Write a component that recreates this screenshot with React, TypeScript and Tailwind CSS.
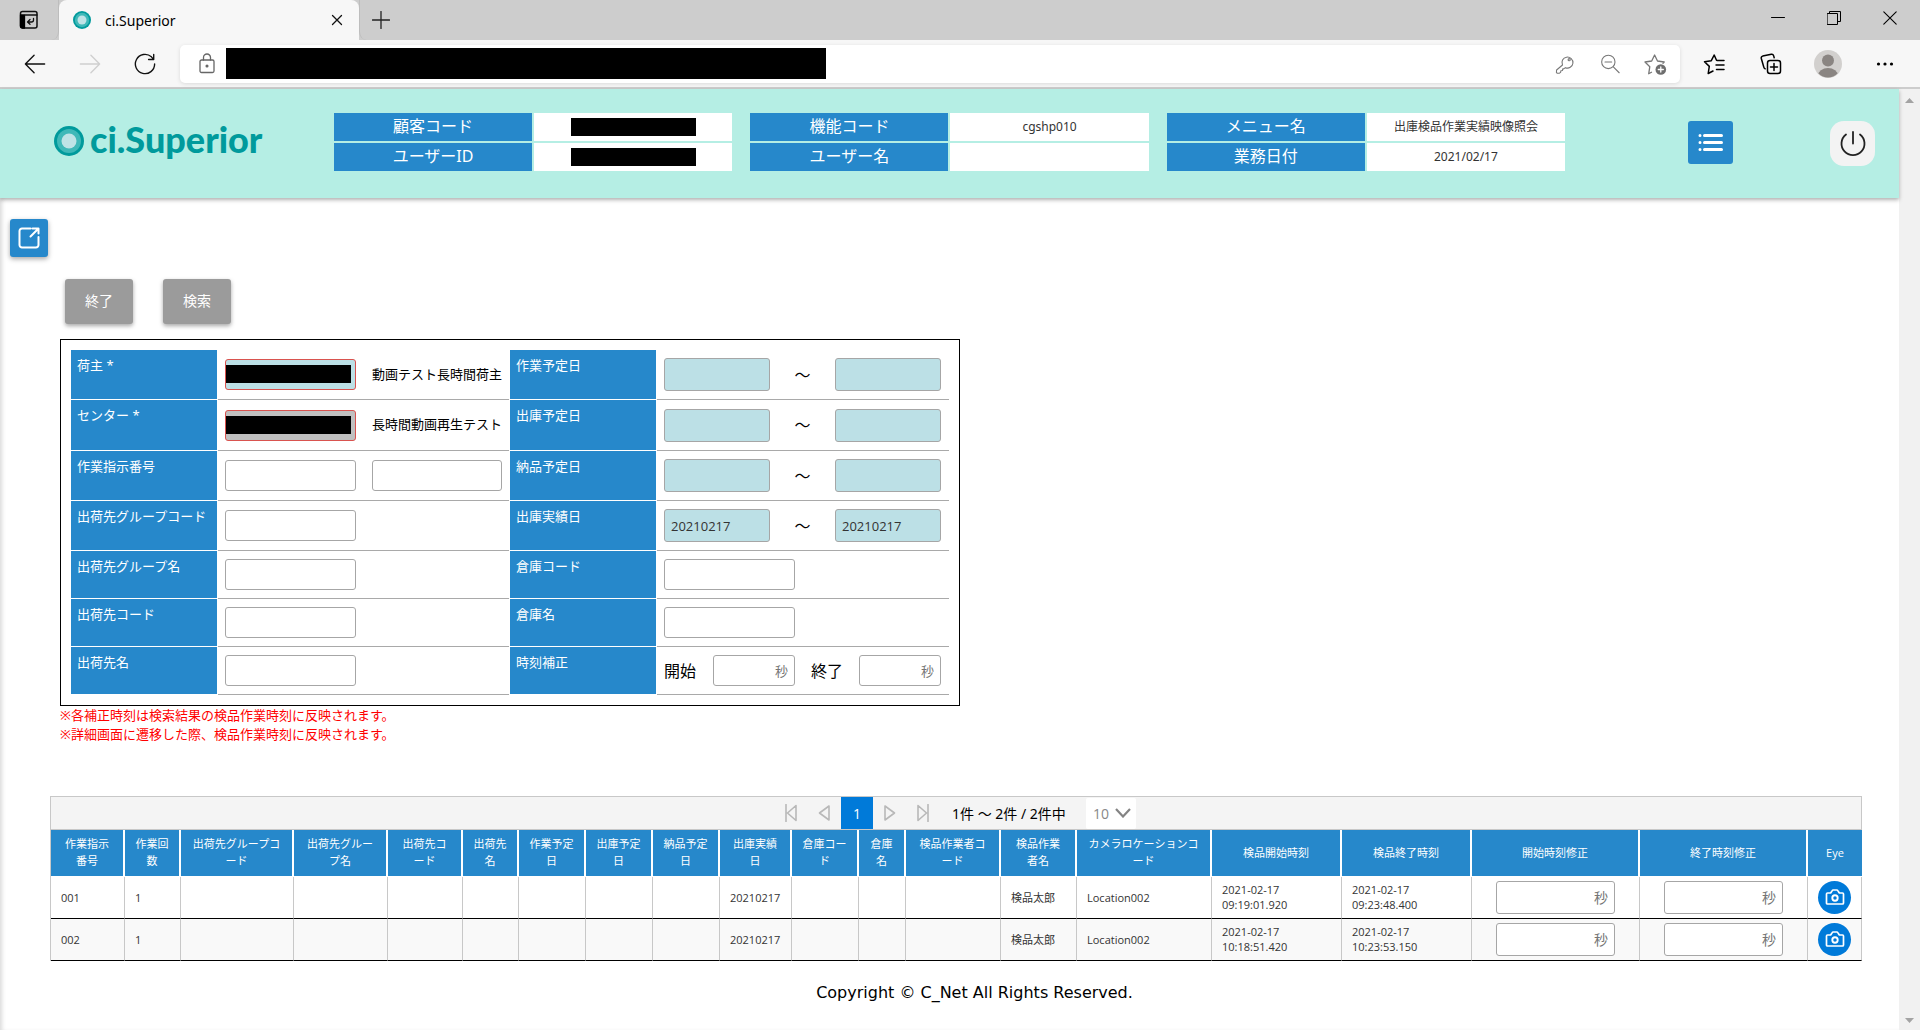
import React from "react";

type IconProps = { className?: string; children: React.ReactNode; box?: string };

function Icon({ className = "", children, box = "0 0 24 24" }: IconProps) {
  return (
    <svg
      viewBox={box}
      className={className}
      fill="none"
      stroke="currentColor"
      strokeWidth={1.3}
      strokeLinecap="round"
      strokeLinejoin="round"
      aria-hidden="true"
    >
      {children}
    </svg>
  );
}

function Ring({ className }: { className: string }) {
  return (
    <svg viewBox="0 0 30 30" className={className} aria-hidden="true">
      <circle cx="15" cy="15" r="15" fill="#009a9c" />
      <circle cx="15" cy="15" r="12" fill="#3fb8b8" />
      <circle cx="15" cy="15" r="7.5" fill="#bfe3e6" />
    </svg>
  );
}

function TitleBar() {
  const control = "flex h-9 w-14 items-center justify-center text-black";
  return (
    <div className="flex h-10 items-stretch bg-[#cdcdcd] pr-[2px]">
      <button aria-label="タブ操作" className="flex w-[59px] items-center justify-center rounded-br-lg border-r border-[#bdbdbd]">
        <Icon className="h-5 w-5" box="0 0 20 20">
          <rect x="1.5" y="1.5" width="16.5" height="16.5" rx="2" stroke="#111" strokeWidth="1.5" />
          <path d="M1.5 5h4v13h-2a2 2 0 0 1-2-2z" fill="#000" stroke="#000" />
          <path d="M6 5h12" stroke="#111" />
          <path d="M14.5 8.500v1.500a2 2 0 0 1-2 2H9M11 9.500L8.500 12l2.500 2.300" stroke="#111" strokeWidth="1.300" />
        </Icon>
      </button>
      <div className="flex w-[300px] items-center rounded-t-lg bg-[#f7f7f7] pr-3 pl-[14px]">
        <Ring className="h-[18px] w-[18px]" />
        <span className="ml-[14px] flex-1 font-['Noto_Sans',sans-serif] text-[14px] text-black">ci.Superior</span>
        <button aria-label="タブを閉じる" className="flex h-5 w-5 items-center justify-center">
          <Icon className="h-3 w-3" box="0 0 12 12">
            <path d="M1.500 1.500l9 9M10.500 1.500l-9 9" stroke="#111" />
          </Icon>
        </button>
      </div>
      <button aria-label="新しいタブ" className="flex w-[43px] items-center justify-center rounded-bl-lg border-l border-[#bdbdbd]">
        <Icon className="h-[18px] w-[18px]" box="0 0 18 18">
          <path d="M9 .500v17M.500 9h17" stroke="#222" />
        </Icon>
      </button>
      <div className="flex-1" />
      <button aria-label="最小化" className={control}>
        <Icon className="h-[14px] w-[14px]" box="0 0 14 14">
          <path d="M.500 6.500h13" stroke="#000" strokeWidth="1" />
        </Icon>
      </button>
      <button aria-label="元に戻す" className={control}>
        <Icon className="h-[14px] w-[14px]" box="0 0 14 14">
          <path d="M.500 2.500h10v11h-10zM2.500 2.500v-2h11v10h-3" stroke="#000" strokeWidth="1" strokeLinejoin="miter" />
        </Icon>
      </button>
      <button aria-label="閉じる" className={control}>
        <Icon className="h-[14px] w-[14px]" box="0 0 14 14">
          <path d="M.800.800l12.400 12.400M13.200.800L.800 13.200" stroke="#000" strokeWidth="1.100" />
        </Icon>
      </button>
    </div>
  );
}

function ToolBar() {
  const nav = "flex h-9 w-[55px] items-center justify-center";
  const inner = "flex h-8 w-[45px] items-center justify-center text-[#777]";
  const outer = "flex h-9 w-[57px] items-center justify-center text-black";
  return (
    <div className="flex h-[49px] items-center border-b-2 border-[#cdcdcd] bg-[#f7f7f7] px-[7px]">
      <button aria-label="戻る" className={nav}>
        <Icon className="h-[22px] w-[22px]">
          <path d="M1.500 12h21M11 2.500L1.500 12l9.500 9.500" stroke="#111" strokeWidth="1.500" />
        </Icon>
      </button>
      <button aria-label="進む" disabled className={nav}>
        <Icon className="h-[22px] w-[22px]">
          <path d="M1.500 12h21M13 2.500l9.500 9.500-9.500 9.500" stroke="#cfcfcf" strokeWidth="1.500" />
        </Icon>
      </button>
      <button aria-label="更新" className={nav}>
        <Icon className="h-[22px] w-[22px]">
          <path d="M22.500 12A10.500 10.500 0 1 1 19 4.200l2.300 2.600M21.500 1.500v5.600h-5.600" stroke="#111" strokeWidth="1.500" />
        </Icon>
      </button>
      <div className="mr-[5px] ml-2 flex h-[38px] flex-1 items-center rounded-[5px] bg-white pr-[3px] pl-4 shadow-[0_1px_4px_rgba(0,0,0,0.12)]">
        <Icon className="h-[22px] w-[22px] text-[#666]" box="0 0 22 22">
          <rect x="4" y="7" width="14" height="12.500" rx="1.500" />
          <path d="M7.500 7V4.500a3.500 3.500 0 0 1 7 0V7" />
          <circle cx="11" cy="13" r=".900" fill="currentColor" />
        </Icon>
        <input aria-label="アドレス" className="ml-2 h-[31px] w-[600px] bg-black" />
        <div className="flex-1" />
        <button aria-label="パスワード" className={inner}>
          <Icon className="h-5 w-5">
            <path d="M9 13.200a6.600 6.600 0 1 1 3.400 3.200l-1.900 1.400-1.200 0-.300 1.900-1.900.300-.400 2-1.300 1H2.500l-.800-.900.200-2.900z" />
            <circle cx="17" cy="6.800" r="1.300" />
          </Icon>
        </button>
        <button aria-label="縮小" className={inner}>
          <Icon className="h-5 w-5">
            <circle cx="10" cy="9.500" r="8" />
            <path d="M16 15.500l7 7M6 9.500h8" />
          </Icon>
        </button>
        <button aria-label="お気に入りに追加" className={inner}>
          <Icon className="h-6 w-6">
            <path d="M8.500 20.300l-2.800 1.500L6.800 14.700 2 10l6.700-1L11.600 3l2.900 6 6.700 1-1.200 1.200" />
            <circle cx="17.800" cy="17.500" r="5.300" fill="#6e6e6e" stroke="none" />
            <path d="M17.800 15v5M15.300 17.500h5" stroke="#fff" />
          </Icon>
        </button>
      </div>
      <button aria-label="お気に入り" className={outer}>
        <Icon className="h-6 w-6">
          <path d="M14.500 8.200l-2.300-5.200-2.900 5.700-6.800 1 4.800 4.700-1.100 7.100 4.800-2.500" strokeWidth="1.500" />
          <path d="M15 8.500h7M14 13h8M14.500 17.500h7.500" strokeWidth="1.500" />
        </Icon>
      </button>
      <button aria-label="コレクション" className={outer}>
        <Icon className="h-6 w-6">
          <rect x="8.500" y="8.500" width="13" height="13" rx="2.500" strokeWidth="1.500" />
          <path d="M15 11.500v7M11.500 15h7" strokeWidth="1.500" />
          <path d="M6.200 16.800a3 3 0 0 1-1.500-2L2.300 6.500a2 2 0 0 1 1.400-2.400l8.600-1.900a2 2 0 0 1 2.300 1.400l.600 2.200" strokeWidth="1.500" />
        </Icon>
      </button>
      <button aria-label="プロフィール" className={outer}>
        <svg viewBox="0 0 28 28" className="h-7 w-7" aria-hidden="true">
          <clipPath id="avatar">
            <circle cx="14" cy="14" r="13.500" />
          </clipPath>
          <circle cx="14" cy="14" r="14" fill="#d2d0ce" />
          <circle cx="14" cy="10.500" r="6" fill="#8a8582" />
          <ellipse cx="14" cy="25.500" rx="10" ry="7.500" fill="#8a8582" clipPath="url(#avatar)" />
        </svg>
      </button>
      <button aria-label="設定など" className={outer}>
        <svg viewBox="0 0 18 4" className="h-1 w-[18px]" aria-hidden="true">
          <circle cx="2.500" cy="2" r="1.600" />
          <circle cx="9" cy="2" r="1.600" />
          <circle cx="15.500" cy="2" r="1.600" />
        </svg>
      </button>
    </div>
  );
}

type InfoRow = { label: string; value: string; masked?: boolean };

const INFO: InfoRow[][] = [
  [
    { label: "顧客コード", value: "", masked: true },
    { label: "ユーザーID", value: "", masked: true },
  ],
  [
    { label: "機能コード", value: "cgshp010" },
    { label: "ユーザー名", value: "" },
  ],
  [
    { label: "メニュー名", value: "出庫検品作業実績映像照会" },
    { label: "業務日付", value: "2021/02/17" },
  ],
];

function Header() {
  return (
    <header className="relative flex h-[109px] items-start bg-[#b5eee4] pr-6 pl-[54px] shadow-[0_2px_4px_rgba(0,0,0,0.3)]">
      <div className="mt-[30px] flex h-[43px] w-[280px] items-center">
        <Ring className="h-[30px] w-[30px]" />
        <span className="ml-[6px] pb-1 font-[Lato,sans-serif] text-[36px] leading-9 font-black text-[#009a9c]">ci.Superior</span>
      </div>
      <div className="mt-6 grid w-[1231px] grid-cols-3 gap-x-[18px]">
        {INFO.map((group) => (
          <dl key={group[0].label} className="grid grid-cols-2 gap-[2px]">
            {group.map((row) => (
              <React.Fragment key={row.label}>
                <dt className="flex h-7 items-center justify-center bg-[#2688cb] pb-[2px] text-[16px] text-white">{row.label}</dt>
                <dd className="flex h-7 items-center justify-center bg-white pb-px text-[12px] text-[#333]">
                  {row.masked ? <span className="h-[18px] w-[125px] bg-black" /> : row.value}
                </dd>
              </React.Fragment>
            ))}
          </dl>
        ))}
      </div>
      <div className="mt-8 ml-[123px] flex flex-1 items-start justify-between">
        <button aria-label="メニュー" className="flex h-[43px] w-[45px] items-center justify-center rounded-[3px] bg-[#2688cb] text-white">
          <Icon className="h-[25px] w-[25px]" box="0 0 25 25">
            <path d="M6.500 5.500h17M6.500 12.500h17M6.500 19.500h17M2 5.500h.010M2 12.500h.010M2 19.500h.010" strokeWidth="3" />
          </Icon>
        </button>
        <button aria-label="ログアウト" className="flex h-[45px] w-[45px] items-center justify-center rounded-[14px] bg-[#f3f3f3] text-[#222]">
          <Icon className="h-[26px] w-[26px]" box="0 0 26 26">
            <path d="M13 1v11.500M6 3.500a11.500 11.500 0 1 0 14 0" strokeWidth="1.800" />
          </Icon>
        </button>
      </div>
    </header>
  );
}

function Field({ id, label, children }: { id: string; label: string; children: React.ReactNode }) {
  return (
    <>
      <label htmlFor={id} className="border-r border-b border-white bg-[#2688cb] bg-clip-padding pt-[5px] pl-[6px] text-[13px] leading-5 text-white">
        {label}
      </label>
      <div className="mr-px flex items-center border-b border-[#a9a9a9] pr-[7px] pl-[7px]">{children}</div>
    </>
  );
}

const BOX = "h-[31px] rounded-[3px] border border-[#a6a6a6] bg-white px-[6px] text-[13px] text-[#333] placeholder:text-[#757575]";

function TextField({ id, label }: { id: string; label: string }) {
  return (
    <Field id={id} label={label}>
      <input id={id} className={BOX + " w-[131px]"} />
    </Field>
  );
}

function DateRange({ id, label, value = "" }: { id: string; label: string; value?: string }) {
  const box =
    "h-[33px] w-[106px] rounded-[3px] border border-[#a6a6a6] bg-[#bce0e6] px-[6px] font-['Open_Sans',sans-serif] text-[13px] text-[#333]";
  return (
    <Field id={id} label={label}>
      <input id={id} defaultValue={value} className={box} />
      <span className="w-[65px] text-center text-[16px] leading-5 text-black">～</span>
      <input aria-label={label + "（終了）"} defaultValue={value} className={box} />
    </Field>
  );
}

function MaskedField({ id, label, name, tone }: { id: string; label: string; name: string; tone: string }) {
  return (
    <Field id={id} label={label}>
      <span className="relative">
        <input id={id} className={"block h-[31px] w-[131px] rounded-[3px] border border-[#d9534f] px-[6px] text-[13px] " + tone} />
        <span className="absolute top-[6px] left-px h-[18px] w-[125px] bg-black" />
      </span>
      <span className="ml-4 flex-1 text-[13px] whitespace-nowrap text-black">{name}</span>
    </Field>
  );
}

function SearchForm() {
  return (
    <form className="w-[900px] border border-black px-[10px] py-[10px]">
      <div className="grid auto-rows-[48px] grid-cols-[147px_292px_147px_293px] grid-rows-[50px_51px_50px_50px]">
        <MaskedField id="owner" label="荷主 *" name="動画テスト長時間荷主" tone="bg-[#bce0e6]" />
        <DateRange id="work-date" label="作業予定日" />
        <MaskedField id="center" label="センター *" name="長時間動画再生テスト" tone="bg-[#c0c0c0]" />
        <DateRange id="ship-date" label="出庫予定日" />
        <Field id="order-no" label="作業指示番号">
          <input id="order-no" className={BOX + " w-[131px]"} />
          <input aria-label="作業指示番号（枝番）" className={BOX + " ml-4 w-[130px]"} />
        </Field>
        <DateRange id="delivery-date" label="納品予定日" />
        <TextField id="dest-group-code" label="出荷先グループコード" />
        <DateRange id="result-date" label="出庫実績日" value="20210217" />
        <TextField id="dest-group-name" label="出荷先グループ名" />
        <TextField id="warehouse-code" label="倉庫コード" />
        <TextField id="dest-code" label="出荷先コード" />
        <TextField id="warehouse-name" label="倉庫名" />
        <TextField id="dest-name" label="出荷先名" />
        <Field id="start-shift" label="時刻補正">
          <span className="w-[33px] text-[16px] text-black">開始</span>
          <input id="start-shift" placeholder="秒" className={BOX + " ml-4 w-[82px] text-right"} />
          <label htmlFor="end-shift" className="ml-4 text-[16px] text-black">
            終了
          </label>
          <input id="end-shift" placeholder="秒" className={BOX + " ml-4 w-[82px] text-right"} />
        </Field>
      </div>
    </form>
  );
}

const COLUMNS = [
  { title: "作業指示番号", width: "w-[74px]" },
  { title: "作業回数", width: "w-[56px]" },
  { title: "出荷先グループコード", width: "w-[113px]" },
  { title: "出荷先グループ名", width: "w-[94px]" },
  { title: "出荷先コード", width: "w-[75px]" },
  { title: "出荷先名", width: "w-[56px]" },
  { title: "作業予定日", width: "w-[67px]" },
  { title: "出庫予定日", width: "w-[67px]" },
  { title: "納品予定日", width: "w-[67px]" },
  { title: "出庫実績日", width: "w-[72px]" },
  { title: "倉庫コード", width: "w-[67px]" },
  { title: "倉庫名", width: "w-[47px]" },
  { title: "検品作業者コード", width: "w-[95px]" },
  { title: "検品作業者名", width: "w-[76px]" },
  { title: "カメラロケーションコード", width: "w-[135px]" },
  { title: "検品開始時刻", width: "w-[130px]" },
  { title: "検品終了時刻", width: "w-[130px]" },
  { title: "開始時刻修正", width: "w-[168px]" },
  { title: "終了時刻修正", width: "w-[168px]" },
  { title: "Eye", width: "w-[54px]" },
];

const ROWS = [
  { no: "001", count: "1", date: "20210217", who: "検品太郎", place: "Location002", day: "2021-02-17", start: "09:19:01.920", end: "09:23:48.400" },
  { no: "002", count: "1", date: "20210217", who: "検品太郎", place: "Location002", day: "2021-02-17", start: "10:18:51.420", end: "10:23:53.150" },
];

function Pager() {
  const step = "flex h-8 w-8 items-center justify-center text-[#b8b8b8]";
  return (
    <div className="flex h-[34px] items-center gap-px border border-[#c8c8c8] bg-[#f4f4f4] pl-[724px]">
      <button aria-label="最初のページ" className={step}>
        <Icon className="h-[18px] w-3" box="0 0 12 18">
          <path d="M1 .500v17M11 1.500v15L2.500 9z" strokeWidth="1.600" />
        </Icon>
      </button>
      <button aria-label="前のページ" className={step}>
        <Icon className="h-4 w-3" box="0 0 12 16">
          <path d="M11 1v14L1.500 8z" strokeWidth="1.600" />
        </Icon>
      </button>
      <button className="h-8 w-8 bg-[#007ad9] font-['Open_Sans',sans-serif] text-[14px] text-white">1</button>
      <button aria-label="次のページ" className={step}>
        <Icon className="h-4 w-3" box="0 0 12 16">
          <path d="M1 1v14L10.500 8z" strokeWidth="1.600" />
        </Icon>
      </button>
      <button aria-label="最後のページ" className={step}>
        <Icon className="h-[18px] w-3" box="0 0 12 18">
          <path d="M11 .500v17M1 1.500v15L9.500 9z" strokeWidth="1.600" />
        </Icon>
      </button>
      <span className="ml-3 w-[133px] text-[14px] whitespace-nowrap text-black">1件 ～ 2件 / 2件中</span>
      <div className="relative flex items-center">
        <select aria-label="表示件数" className="h-[31px] w-[50px] appearance-none rounded-[2px] bg-white pl-[7px] font-['Open_Sans',sans-serif] text-[14px] text-[#888]">
          <option>10</option>
        </select>
        <svg viewBox="0 0 16 10" className="pointer-events-none absolute right-[5px] h-[10px] w-4" fill="none" stroke="#848484" strokeWidth="2.200" aria-hidden="true">
          <path d="M1 1l7 7.500L15 1" />
        </svg>
      </div>
    </div>
  );
}

function ResultTable() {
  const cell = "h-[42px] border-r border-[#c8c8c8] px-[10px] pt-0 pb-px";
  const line = "border-b border-b-black";
  const seconds =
    "mx-auto block h-[33px] w-[119px] rounded-[3px] border border-[#a6a6a6] bg-white px-[6px] text-right text-[14px] text-[#333] placeholder:text-[#757575]";
  return (
    <table className="w-full table-fixed border-separate border-spacing-0 border-l border-[#c8c8c8] text-left font-['Open_Sans','Noto_Sans_CJK_JP',sans-serif] text-[11px] leading-[15px] text-[#333]">
      <colgroup>
        {COLUMNS.map((c) => (
          <col key={c.title} className={c.width} />
        ))}
      </colgroup>
      <thead>
        <tr>
          {COLUMNS.map((c) => (
            <th
              key={c.title}
              scope="col"
              className="h-[47px] border-r-2 border-b border-white bg-[#2688cb] bg-clip-padding px-[10px] pt-0 pb-[2px] text-center leading-[17px] font-normal text-white [line-break:anywhere] last:border-r-0"
            >
              {c.title}
            </th>
          ))}
        </tr>
      </thead>
      <tbody>
        {ROWS.map((r) => {
          const c = cell + " " + line;
          return (
            <tr key={r.no} className="even:bg-[#f9f9f9]">
              <td className={c}>{r.no}</td>
              <td className={c}>{r.count}</td>
              <td className={c} />
              <td className={c} />
              <td className={c} />
              <td className={c} />
              <td className={c} />
              <td className={c} />
              <td className={c} />
              <td className={c}>{r.date}</td>
              <td className={c} />
              <td className={c} />
              <td className={c} />
              <td className={c}>{r.who}</td>
              <td className={c}>{r.place}</td>
              <td className={c}>
                {r.day}
                <br />
                {r.start}
              </td>
              <td className={c}>
                {r.day}
                <br />
                {r.end}
              </td>
              <td className={c}>
                <input aria-label={"開始時刻修正 " + r.no} placeholder="秒" className={seconds} />
              </td>
              <td className={c}>
                <input aria-label={"終了時刻修正 " + r.no} placeholder="秒" className={seconds} />
              </td>
              <td className={c}>
                <button aria-label={"映像 " + r.no} className="flex h-[33px] w-[33px] items-center justify-center rounded-full bg-[#007ad9] text-white">
                  <Icon className="h-5 w-5" box="0 0 20 20">
                    <path
                      d="M2.500 6h2.600q.600 0 .900-.500l1.200-1.900q.300-.600 1-.600h3.600q.700 0 1 .600L14 5.500q.300.500.900.500h2.600q1 0 1 1v9q0 1-1 1h-15q-1 0-1-1V7q0-1 1-1z"
                      strokeWidth="1.700"
                    />
                    <circle cx="10" cy="11" r="2.700" strokeWidth="1.900" />
                  </Icon>
                </button>
              </td>
            </tr>
          );
        })}
      </tbody>
    </table>
  );
}

export default function App() {
  const action =
    "h-[45px] w-[68px] rounded-[3px] bg-[#9b9b9b] pb-[2px] text-[14px] text-white shadow-[0_2px_4px_rgba(0,0,0,0.35)]";
  return (
    <div className="flex min-h-screen flex-col bg-white font-['Noto_Sans','Noto_Sans_CJK_JP',sans-serif]">
      <TitleBar />
      <ToolBar />
      <div className="flex flex-1">
        <div className="flex min-w-0 flex-1 flex-col">
          <Header />
          <main className="flex flex-1 flex-col pt-[21px] shadow-[inset_4px_0_4px_-2px_rgba(0,0,0,0.15)]">
            <button aria-label="別ウィンドウで開く" className="ml-[10px] flex h-[38px] w-[38px] items-center justify-center rounded-[3px] bg-[#2688cb] text-white shadow-[0_2px_5px_rgba(0,0,0,0.35)]">
              <Icon className="h-6 w-6">
                <path d="M13.500 2.500H5A2.500 2.500 0 0 0 2.500 5v14A2.500 2.500 0 0 0 5 21.500h14a2.500 2.500 0 0 0 2.500-2.500v-8M15.500 2.500h6v5M21 3l-7.500 7.500" strokeWidth="2" />
              </Icon>
            </button>
            <div className="mt-[22px] ml-[65px] flex gap-[30px]">
              <button className={action}>終了</button>
              <button className={action}>検索</button>
            </div>
            <div className="mt-[15px] ml-[60px]">
              <SearchForm />
              <p className="text-[13px] leading-[19px] text-[#ff0000]">
                ※各補正時刻は検索結果の検品作業時刻に反映されます。
                <br />
                ※詳細画面に遷移した際、検品作業時刻に反映されます。
              </p>
            </div>
            <section className="mt-[52px] mr-[37px] ml-[50px]">
              <Pager />
              <ResultTable />
            </section>
            <footer className="mt-5 pl-[50px] text-center font-['DejaVu_Sans',sans-serif] text-[16px] leading-6 text-black">
              Copyright © C_Net All Rights Reserved.
            </footer>
          </main>
        </div>
        <div className="flex w-[21px] flex-col items-center justify-between bg-[#f1f1f1] pt-[9px] pb-[7px]" aria-hidden="true">
          <svg viewBox="0 0 9 5" className="h-[5px] w-[9px]" fill="#a3a3a3">
            <path d="M4.500 0L9 5H0z" />
          </svg>
          <svg viewBox="0 0 9 5" className="h-[5px] w-[9px]" fill="#a3a3a3">
            <path d="M0 0h9L4.500 5z" />
          </svg>
        </div>
      </div>
    </div>
  );
}
